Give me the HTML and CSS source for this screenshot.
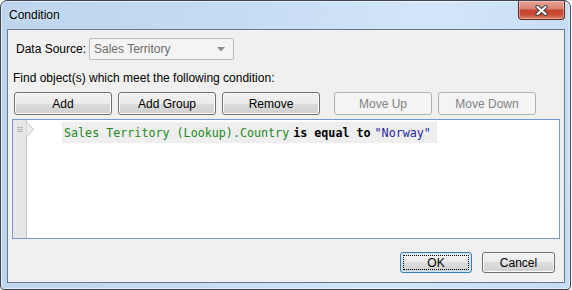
FILE: index.html
```html
<!DOCTYPE html>
<html lang="en">
<head>
  <meta charset="UTF-8">
  <title>Condition</title>
  <link rel="stylesheet" href="styles.css">
</head>
<body>

<div class="window">
  <div class="titlebar">
    <span class="title">Condition</span>
    <button class="close" aria-label="Close">
      <svg width="13" height="11" viewBox="0 0 13 11">
        <path d="M2.5 2 L10.5 9 M10.5 2 L2.5 9" stroke="#3b3f46" stroke-width="4.2" stroke-linecap="round"/>
        <path d="M2.5 2 L10.5 9 M10.5 2 L2.5 9" stroke="#ffffff" stroke-width="2.2" stroke-linecap="round"/>
      </svg>
    </button>
  </div>

  <div class="client">
    <div class="source-row">
      <label class="source-label">Data Source:</label>
      <div class="combo disabled">
        <span>Sales Territory</span>
        <svg width="8" height="5" viewBox="0 0 8 5"><path d="M0 0 H8 L4 4.5 Z" fill="#8e8e8e"/></svg>
      </div>
    </div>

    <div class="hint">Find object(s) which meet the following condition:</div>

    <div class="toolbar">
      <button class="btn">Add</button>
      <button class="btn">Add Group</button>
      <button class="btn">Remove</button>
      <button class="btn move" disabled>Move Up</button>
      <button class="btn" disabled>Move Down</button>
    </div>

    <div class="editor">
      <div class="gutter">
        <div class="grip"><i></i><i></i><i></i></div>
        <svg class="gutter-tab" width="9" height="17" viewBox="0 0 9 17">
          <path d="M0.5 0 L7.5 7.5 L0.5 15 L0.5 17" fill="#ececec" stroke="#c2c2c2" stroke-width="1"/>
        </svg>
      </div>
      <div class="lines">
        <div class="line">
          <span class="field">Sales Territory (Lookup).Country</span><span class="op">is equal to</span><span class="value">"Norway"</span>
        </div>
      </div>
    </div>

    <div class="footer">
      <button class="btn footer-btn default"><span>OK</span></button>
      <button class="btn footer-btn cancel">Cancel</button>
    </div>
  </div>
</div>

</body>
</html>
```

FILE: styles.css
```css
body {
  margin: 0;
  font-family: "Segoe UI", "Liberation Sans", sans-serif;
  font-size: 12px;
  color: #000;
  background: #fff;
}

.window {
  width: 571px;
  height: 290px;
  box-sizing: border-box;
  border: 1px solid #3d4652;
  border-radius: 7px 7px 4px 4px;
  padding: 0 5px 6px 6px;
  display: flex;
  flex-direction: column;
  background: linear-gradient(100deg, #bcd4ee 0%, #c6dcf3 40%, #d3e6f9 70%, #c4dbf3 100%);
  box-shadow: inset 0 0 0 1px rgba(255,255,255,0.55);
}

.titlebar {
  height: 28px;
  display: flex;
  justify-content: space-between;
  align-items: flex-start;
}

.title {
  margin: 7px 0 0 2px;
  font-size: 12px;
  text-shadow: 0 0 6px rgba(255,255,255,0.9);
}

.close {
  width: 47px;
  height: 19px;
  padding: 0;
  border: 1px solid #5e2a22;
  border-top: none;
  border-radius: 0 0 4px 4px;
  background: linear-gradient(#e7a595 0%, #d98070 45%, #c7422c 50%, #c94b33 75%, #d7826b 100%);
  box-shadow: inset 0 0 0 1px rgba(255,210,200,0.5);
  display: flex;
  align-items: center;
  justify-content: center;
}

.client {
  flex: 1;
  border: 1px solid #67788c;
  background: #f0f0f0;
  padding: 8px 4px 0 4px;
  display: flex;
  flex-direction: column;
}

.source-row {
  display: flex;
  align-items: center;
  height: 22px;
}

.source-label {
  flex: none;
  width: 77px;
  padding-left: 4px;
  box-sizing: border-box;
  white-space: nowrap;
}

.combo {
  flex: none;
  width: 145px;
  height: 22px;
  box-sizing: border-box;
  border: 1px solid #bcbcbc;
  border-radius: 2px;
  background: #f4f4f4;
  display: flex;
  align-items: center;
  justify-content: space-between;
  padding: 0 8px 0 4px;
  color: #6d6d6d;
}

.hint {
  margin: 11px 0 0 1px;
  line-height: 15px;
}

.toolbar {
  display: flex;
  gap: 6px;
  margin: 6px 0 0 2px;
}

.btn {
  width: 98px;
  height: 23px;
  padding: 0;
  font-family: inherit;
  font-size: 12px;
  color: #000;
  border: 1px solid #707070;
  border-radius: 3px;
  background: linear-gradient(#f2f2f2 0%, #ebebeb 50%, #dddddd 50%, #cfcfcf 100%);
  box-shadow: inset 0 0 0 1px #fcfcfc;
}

.btn:disabled {
  color: #838383;
  border-color: #adb2b5;
  background: #f4f4f4;
  box-shadow: none;
}

.move {
  margin-left: 8px;
}

.editor {
  height: 120px;
  box-sizing: border-box;
  margin-top: 4px;
  border: 1px solid #7399d4;
  background: #fff;
  display: flex;
}

.gutter {
  position: relative;
  width: 13px;
  background: #e6e6e6;
  border-right: 1px solid #c6c6c6;
}

.grip {
  display: flex;
  flex-direction: column;
  gap: 1px;
  margin: 7px 0 0 4px;
}

.grip i {
  display: block;
  width: 6px;
  height: 1px;
  background: #b4b4b4;
}

.gutter-tab {
  position: absolute;
  top: 2px;
  left: 13px;
}

.lines {
  flex: 1;
  padding: 2px 0 0 35px;
}

.line {
  display: inline-block;
  height: 21px;
  box-sizing: border-box;
  padding: 2px 6px 0 2px;
  line-height: 19px;
  background: #eeeeee;
  font-family: "DejaVu Sans Mono", "Liberation Mono", monospace;
  font-size: 11.7px;
}

.field {
  color: #208a20;
}

.op {
  margin-left: 4px;
  font-weight: bold;
}

.value {
  margin-left: 4px;
  color: #1f1fa0;
}

.footer {
  display: flex;
  justify-content: flex-end;
  gap: 10px;
  margin: 13px 5px 0 0;
}

.footer-btn {
  width: 72px;
  height: 21px;
}

.cancel {
  width: 73px;
}

.default {
  border-color: #3c7fb1;
  box-shadow: inset 0 0 0 1px #c9e3f7;
  padding: 2px;
}

.default span {
  display: flex;
  align-items: center;
  justify-content: center;
  height: 100%;
  box-sizing: border-box;
  border: 1px dotted #000;
}
```
